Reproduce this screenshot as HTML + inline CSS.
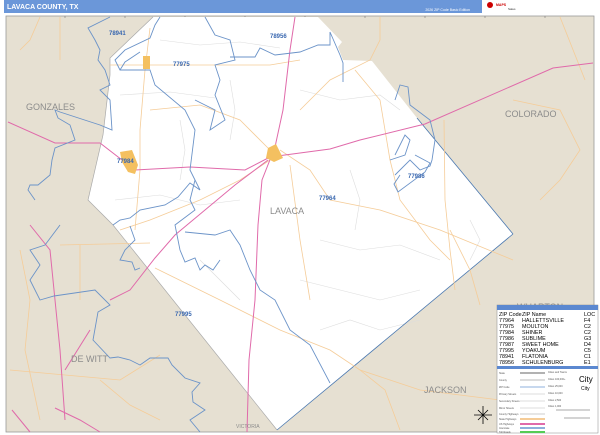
<!DOCTYPE html>
<html><head><meta charset="utf-8"><style>
html,body{margin:0;padding:0;width:600px;height:435px;overflow:hidden;background:#fff;font-family:"Liberation Sans",sans-serif}
</style></head><body>
<svg width="600" height="435" viewBox="0 0 600 435" xmlns="http://www.w3.org/2000/svg" font-family="Liberation Sans, sans-serif">
<rect x="0" y="0" width="600" height="435" fill="#fff"/>
<rect x="4" y="0" width="592" height="13" fill="#6b97d9"/>
<text x="7" y="9" font-size="7" font-weight="bold" fill="#fff">LAVACA COUNTY, TX</text>
<text x="470" y="11" font-size="3.5" fill="#fff" text-anchor="end">2026 ZIP Code Basic Edition</text>
<rect x="482" y="0" width="114" height="13" fill="#fff"/>
<circle cx="490" cy="5" r="3" fill="#c00"/>
<text x="496" y="6" font-size="3.5" fill="#c00" font-weight="bold">MAPS</text>
<text x="508" y="10" font-size="3" fill="#333">Sales</text>
<rect x="6" y="16" width="588" height="416" fill="#e6e0d2" stroke="#999" stroke-width="0.8"/>
<g stroke="#777" stroke-width="0.6">
<line x1="65" y1="16" x2="65" y2="18"/><line x1="125" y1="16" x2="125" y2="18"/><line x1="185" y1="16" x2="185" y2="18"/><line x1="245" y1="16" x2="245" y2="18"/><line x1="305" y1="16" x2="305" y2="18"/><line x1="365" y1="16" x2="365" y2="18"/><line x1="425" y1="16" x2="425" y2="18"/><line x1="485" y1="16" x2="485" y2="18"/><line x1="545" y1="16" x2="545" y2="18"/>
</g>
<!-- county -->
<polygon points="153,17 318,17 342,42 338,47 343,60 372,61 417,118 513,234 500,245 277,430 113,225 88,200 103,135 110,75 110,58" fill="#fff"/>
<!-- minor gray roads -->
<g fill="none" stroke="#ddd" stroke-width="0.6">
<polyline points="160,40 200,45 240,42 280,48"/>
<polyline points="120,95 170,92 215,98"/>
<polyline points="115,200 160,195 200,205 240,200"/>
<polyline points="300,90 340,100 380,95 400,110"/>
<polyline points="320,240 360,250 400,245 440,260"/>
<polyline points="300,280 340,290 380,300 420,290"/>
<polyline points="200,260 220,280 240,300"/>
<polyline points="350,170 360,200 355,230"/>
<polyline points="180,120 185,150 180,180"/>
<polyline points="230,80 235,110 230,140"/>
<polyline points="320,330 350,320 380,330 420,320"/>
<polyline points="470,220 480,240 470,260"/>
</g>
<polyline points="153,17 110,58 110,75 103,135 88,200 113,225 277,430" fill="none" stroke="#aaa" stroke-width="0.7"/>
<polyline points="277,430 513,234" fill="none" stroke="#4a78b0" stroke-width="0.8"/>
<polyline points="417,118 513,234" fill="none" stroke="#4a78b0" stroke-width="0.8"/>
<!-- orange roads -->
<g fill="none" stroke="#f5cc98" stroke-width="0.8">
<polyline points="150,28 145,70 140,130 140,170 135,230"/>
<polyline points="110,65 270,65 300,60"/>
<polyline points="150,110 200,105 240,120 270,150"/>
<polyline points="280,150 310,170 330,200 380,210 440,230 513,260"/>
<polyline points="270,160 240,180 200,200 150,220 120,230"/>
<polyline points="155,268 220,300 280,330 330,350 360,370 420,390 500,400"/>
<polyline points="290,165 300,240 310,300"/>
<polyline points="355,70 380,100 390,160 400,200 430,240 450,260"/>
<polyline points="380,17 380,40 370,60 330,80 300,110"/>
<polyline points="20,50 30,40 40,17"/>
<polyline points="60,17 60,60"/>
<polyline points="513,100 560,110 580,150 560,180 540,200"/>
<polyline points="444,120 445,200 450,250 455,290"/>
<polyline points="20,250 30,300 25,350 40,420"/>
<polyline points="60,245 150,243"/>
<polyline points="80,245 80,300"/>
<polyline points="10,370 120,380 160,355"/>
<polyline points="100,380 130,405 160,420"/>
<polyline points="360,370 385,390 400,430"/>
<polyline points="450,230 470,270 480,305"/>
<polyline points="560,17 585,80"/>
</g>
<!-- pink highways -->
<g fill="none" stroke="#e06aaa" stroke-width="1">
<polyline points="8,122 55,143 100,143 135,170 190,167 245,170 270,157 330,149 360,140 425,124 553,68 593,63"/>
<polyline points="295,17 290,50 283,110 275,147 262,180 258,225 255,300 249,360 247,432"/>
<polyline points="268,160 235,185 205,210 175,235 155,258 130,290 110,300"/>
<polyline points="30,225 50,250 55,300 60,350 65,420"/>
<polyline points="65,370 90,330"/>
<polyline points="55,408 80,420 100,432"/>
<polyline points="12,410 30,432"/>
</g>
<!-- zip boundaries -->
<g fill="none" stroke="#6b93c8" stroke-width="0.9">
<polyline points="110,17 88,28 95,40 100,50 98,60 105,70 110,85 100,90 110,100 112,130 100,125 60,112 55,110 58,118 70,125 75,140 55,148 52,160 50,175 38,185 30,185 28,190 35,200"/>
<polyline points="113,225 120,220 130,218 140,210 165,205 178,197 190,183 200,190 195,180 190,170 195,130 185,110 155,85 150,70 120,70 115,60 125,50 150,38 155,25 160,17"/>
<polyline points="205,17 215,35 230,40 235,60 215,65 220,80 215,95 225,120 210,130 215,110 195,100"/>
<polyline points="230,57 255,57 260,48 275,55 300,52 318,45 330,45 330,32 340,55 343,63 343,82"/>
<polyline points="120,70 125,62 140,52"/>
<polyline points="195,180 190,200 195,210 175,225 180,250 185,262 195,258 200,270 205,265 213,270 220,260"/>
<polyline points="185,232 215,235 230,230 240,245 250,270 260,290 275,300 290,330 310,345 330,383"/>
<polyline points="130,226 135,240 125,250 120,260 132,262 135,270 140,268"/>
<polyline points="60,225 45,245 30,250 40,265 30,280 40,300 54,296 95,290 110,305 98,312 93,340 110,358 118,357 130,360 140,365 150,358 168,358 172,365 185,378 200,383 192,392 193,402 205,410 190,420 200,432"/>
<polyline points="395,100 400,85 408,87 410,105 430,120 435,140 432,160 430,166 420,170 410,160 400,170 395,175"/>
<polyline points="395,155 405,135 410,140 405,155 390,160"/>
<polyline points="415,155 430,163 425,172 398,192 394,184 400,175"/>
</g>
<!-- towns -->
<rect x="143" y="56" width="7" height="13" fill="#f4c060"/>
<polygon points="120,152 132,150 138,165 135,174 128,172 122,162" fill="#f4c060"/>
<polygon points="268,148 276,144 280,152 283,158 274,162 266,158" fill="#f4c060"/>
<!-- labels -->
<g font-size="9" fill="#8c8c8c">
<text x="26" y="110">GONZALES</text>
<text x="505" y="117">COLORADO</text>
<text x="270" y="214">LAVACA</text>
<text x="71" y="362">DE WITT</text>
<text x="424" y="393">JACKSON</text>
<text x="517" y="310">WHARTON</text>
</g>
<text x="236" y="428" font-size="5" fill="#8c8c8c">VICTORIA</text>
<g font-size="6" font-weight="bold" fill="#3a68b0">
<text x="109" y="35">78941</text>
<text x="270" y="38">78956</text>
<text x="173" y="66">77975</text>
<text x="117" y="163">77984</text>
<text x="408" y="178">77986</text>
<text x="319" y="200">77964</text>
<text x="175" y="316">77995</text>
</g>
<!-- compass -->
<g stroke="#000" stroke-width="0.8"><line x1="483" y1="406" x2="483" y2="424"/><line x1="474" y1="415" x2="492" y2="415"/><line x1="478" y1="410" x2="488" y2="420"/><line x1="488" y1="410" x2="478" y2="420"/></g>
<!-- legend -->
<rect x="497" y="305" width="101" height="128" fill="#fff" stroke="#888" stroke-width="0.5"/>
<rect x="497" y="305" width="101" height="5" fill="#5b88d0"/>
<g font-size="5.4" fill="#000">
<text x="499" y="316">ZIP Code</text><text x="522" y="316">ZIP Name</text><text x="584" y="316">LOC</text>
<text x="499" y="322">77964</text><text x="522" y="322">HALLETTSVILLE</text><text x="584" y="322">F4</text>
<text x="499" y="328">77975</text><text x="522" y="328">MOULTON</text><text x="584" y="328">C2</text>
<text x="499" y="334">77984</text><text x="522" y="334">SHINER</text><text x="584" y="334">C2</text>
<text x="499" y="340">77986</text><text x="522" y="340">SUBLIME</text><text x="584" y="340">G3</text>
<text x="499" y="346">77987</text><text x="522" y="346">SWEET HOME</text><text x="584" y="346">D4</text>
<text x="499" y="352">77995</text><text x="522" y="352">YOAKUM</text><text x="584" y="352">C5</text>
<text x="499" y="358">78941</text><text x="522" y="358">FLATONIA</text><text x="584" y="358">C1</text>
<text x="499" y="364">78956</text><text x="522" y="364">SCHULENBURG</text><text x="584" y="364">E1</text>
</g>
<rect x="497" y="366" width="101" height="3" fill="#5b88d0"/>
<g stroke-width="1" fill="none">
<line x1="520" y1="373" x2="545" y2="373" stroke="#666"/>
<line x1="520" y1="380" x2="545" y2="380" stroke="#bbb"/>
<line x1="520" y1="387" x2="545" y2="387" stroke="#8fb0dc"/>
<line x1="520" y1="394" x2="545" y2="394" stroke="#ddd"/>
<line x1="520" y1="401" x2="545" y2="401" stroke="#ddd"/>
<line x1="520" y1="408" x2="545" y2="408" stroke="#ddd"/>
<line x1="520" y1="414" x2="545" y2="414" stroke="#ccc"/>
<line x1="520" y1="419" x2="545" y2="419" stroke="#f5cc98" stroke-width="2"/>
<line x1="520" y1="424" x2="545" y2="424" stroke="#e06aaa" stroke-width="2"/>
<line x1="520" y1="428" x2="545" y2="428" stroke="#8fb0dc" stroke-width="2"/>
<line x1="520" y1="432" x2="545" y2="432" stroke="#5c5" stroke-width="2"/>
<line x1="556" y1="410" x2="590" y2="410" stroke="#555" stroke-width="0.5"/>
<line x1="564" y1="418" x2="590" y2="418" stroke="#555" stroke-width="0.5"/>
</g>
<g font-size="2.5" fill="#555">
<text x="499" y="374">State</text><text x="499" y="381">County</text><text x="499" y="388">ZIP Code</text><text x="499" y="395">Primary Streets</text><text x="499" y="402">Secondary Streets</text><text x="499" y="409">Minor Streets</text><text x="499" y="415">County Highways</text><text x="499" y="420">State Highways</text><text x="499" y="425">US Highways</text><text x="499" y="429">Interstate</text><text x="499" y="433">Toll Roads</text>
<text x="548" y="373">Cities and Towns</text><text x="548" y="380">Cities 100,000+</text><text x="548" y="387">Cities 25,000</text><text x="548" y="394">Cities 10,000</text><text x="548" y="401">Cities 2,500</text><text x="548" y="407">Cities 1,000</text>
</g>
<text x="579" y="382" font-size="8" fill="#000">City</text>
<text x="581" y="390" font-size="5" fill="#000">City</text>
</svg>
</body></html>
